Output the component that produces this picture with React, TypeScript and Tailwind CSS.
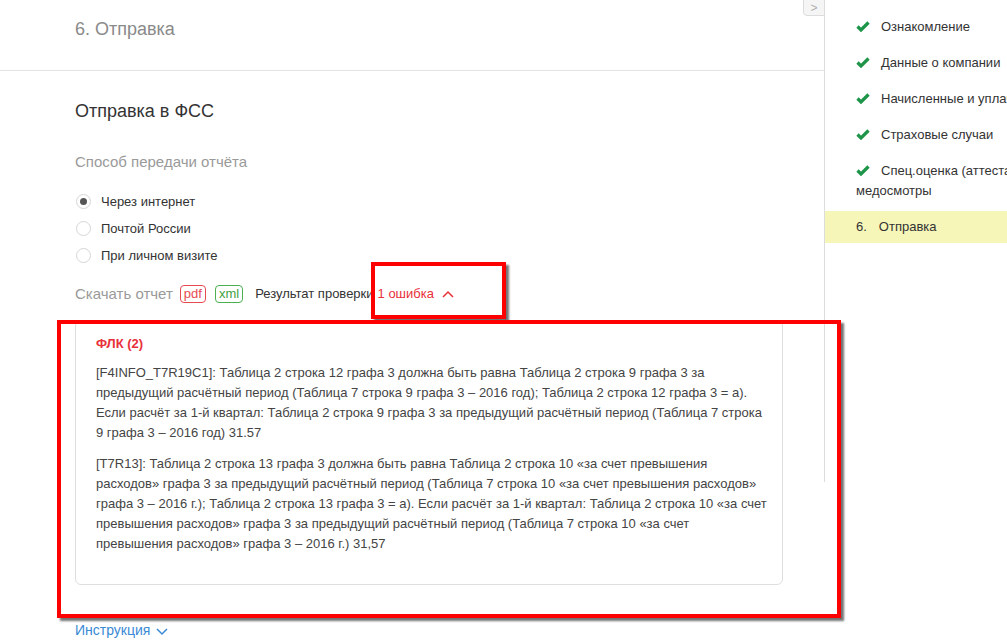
import React from "react";

const STEPS: { lines: string[] }[] = [
  { lines: ["Ознакомление"] },
  { lines: ["Данные о компании"] },
  { lines: ["Начисленные и уплаченные страховые взносы"] },
  { lines: ["Страховые случаи"] },
  { lines: ["Спец.оценка (аттестация) рабочих мест,", "медосмотры"] },
];

const RADIOS = [
  { label: "Через интернет", checked: true },
  { label: "Почтой России", checked: false },
  { label: "При личном визите", checked: false },
];

const FLK = [
  [
    "[F4INFO_T7R19C1]: Таблица 2 строка 12 графа 3 должна быть равна Таблица 2 строка 9 графа 3 за",
    "предыдущий расчётный период (Таблица 7 строка 9 графа 3 – 2016 год); Таблица 2 строка 12 графа 3 = а).",
    "Если расчёт за 1-й квартал: Таблица 2 строка 9 графа 3 за предыдущий расчётный период (Таблица 7 строка",
    "9 графа 3 – 2016 год) 31.57",
  ],
  [
    "[T7R13]: Таблица 2 строка 13 графа 3 должна быть равна Таблица 2 строка 10 «за счет превышения",
    "расходов» графа 3 за предыдущий расчётный период (Таблица 7 строка 10 «за счет превышения расходов»",
    "графа 3 – 2016 г.); Таблица 2 строка 13 графа 3 = а). Если расчёт за 1-й квартал: Таблица 2 строка 10 «за счет",
    "превышения расходов» графа 3 за предыдущий расчётный период (Таблица 7 строка 10 «за счет",
    "превышения расходов» графа 3 – 2016 г.) 31,57",
  ],
];

const CheckMark = () => (
  <svg width="14" height="11" viewBox="0 0 14 11" className="inline-block align-[-1px] mr-[11px]">
    <path d="M1.5 5.5 L5 9 L12.5 1.5" fill="none" stroke="#1d9447" strokeWidth="3.2" />
  </svg>
);

const RedFrame = ({ className }: { className: string }) => (
  <div
    className={
      "absolute border-[4px] border-[#ff0000] shadow-[3px_3px_2px_rgba(0,0,0,0.55)] pointer-events-none " +
      className
    }
  />
);

export default function App() {
  return (
    <div className="relative w-[1007px] h-[640px] overflow-hidden bg-white font-['Liberation_Sans',Arial,sans-serif]">
      <div className="flex w-[1200px]">
        {/* Main column */}
        <main className="w-[824px] shrink-0">
          <div className="h-[71px] pl-[75px] pt-[18px] border-b border-[#e3e3e3] text-[18px] leading-[22px] text-[#8a8a8a]">
            6. Отправка
          </div>

          <div className="pl-[75px] pr-[41px]">
            <h2 className="mt-[29px] text-[18px] leading-[22px] text-[#333]">Отправка в ФСС</h2>

            <div className="mt-[30px] text-[15px] leading-[20px] text-[#9a9a9a]">Способ передачи отчёта</div>

            <div className="mt-[16px] flex flex-col">
              {RADIOS.map((r) => (
                <label key={r.label} className="h-[27px] flex items-center text-[13px] text-[#333]">
                  <span className="w-[15px] h-[15px] ml-[1px] rounded-full border border-[#d6d6d6] flex items-center justify-center">
                    {r.checked && <span className="w-[7px] h-[7px] rounded-full bg-[#555]" />}
                  </span>
                  <span className="ml-[10px]">{r.label}</span>
                </label>
              ))}
            </div>

            <div className="mt-[15px] h-[20px] flex items-center">
              <span className="text-[15px] text-[#9a9a9a]">Скачать отчет</span>
              <span className="ml-[7px] h-[18px] px-[3px] flex items-center rounded-[4px] border border-[#e84a52] text-[13px] text-[#e84a52]">
                pdf
              </span>
              <span className="ml-[9px] h-[18px] px-[3px] flex items-center rounded-[4px] border border-[#4caf50] text-[13px] text-[#3f9f44]">
                xml
              </span>
              <span className="ml-[12px] text-[13px] text-[#333]">Результат проверки</span>
              <span className="ml-[4px] text-[13px] text-[#e8303a]">1 ошибка</span>
              <svg width="12" height="8" viewBox="0 0 12 8" className="ml-[8px]">
                <polyline points="1,7 6,2 11,7" fill="none" stroke="#e8303a" strokeWidth="1.5" />
              </svg>
            </div>

            <div className="mt-[16px] rounded-[6px] border border-[#dedede] pl-[20px] pr-[10px] pt-[13px] pb-[30px] text-[13px] leading-[20px] text-[#444]">
              <div className="font-bold text-[#e8303a]">ФЛК (2)</div>
              {FLK.map((para, i) => (
                <p key={i} className={i === 0 ? "mt-[9px]" : "mt-[11px]"}>
                  {para.map((line) => (
                    <span key={line} className="block whitespace-nowrap">
                      {line}
                    </span>
                  ))}
                </p>
              ))}
            </div>

            <div className="mt-[35px] h-[20px] flex items-center text-[14px] text-[#3a8ad6]">
              Инструкция
              <svg width="12" height="8" viewBox="0 0 12 8" className="ml-[6px] mt-[3px]">
                <polyline points="1,1 6,6 11,1" fill="none" stroke="#3a8ad6" strokeWidth="1.5" />
              </svg>
            </div>
          </div>
        </main>

        {/* Steps sidebar */}
        <aside className="w-[376px] shrink-0 self-start h-[482px] border-l border-[#dcdcdc] pt-[9px] text-[13px] leading-[20px] text-[#333]">
          {STEPS.map((s) => (
            <div key={s.lines[0]} className="pl-[31px] pr-[10px] py-2 whitespace-nowrap">
              <CheckMark />
              {s.lines[0]}
              {s.lines.slice(1).map((l) => (
                <span key={l} className="block">
                  {l}
                </span>
              ))}
            </div>
          ))}
          <div className="mt-[2px] py-[6px] pl-[31px] bg-[#f6f6b9]">
            6.<span className="ml-[12px]">Отправка</span>
          </div>
        </aside>
      </div>

      {/* Collapse tab */}
      <div className="absolute left-[803px] top-[-1px] w-[22px] h-[17px] rounded-bl-[4px] border border-[#dcdcdc] bg-[#f5f5f5] flex items-center justify-center text-[12px] leading-none text-[#b0b0b0]">
        &gt;
      </div>

      {/* Annotation frames */}
      <RedFrame className="left-[371px] top-[262px] w-[135px] h-[57px]" />
      <RedFrame className="left-[57px] top-[320px] w-[784px] h-[298px]" />
    </div>
  );
}
